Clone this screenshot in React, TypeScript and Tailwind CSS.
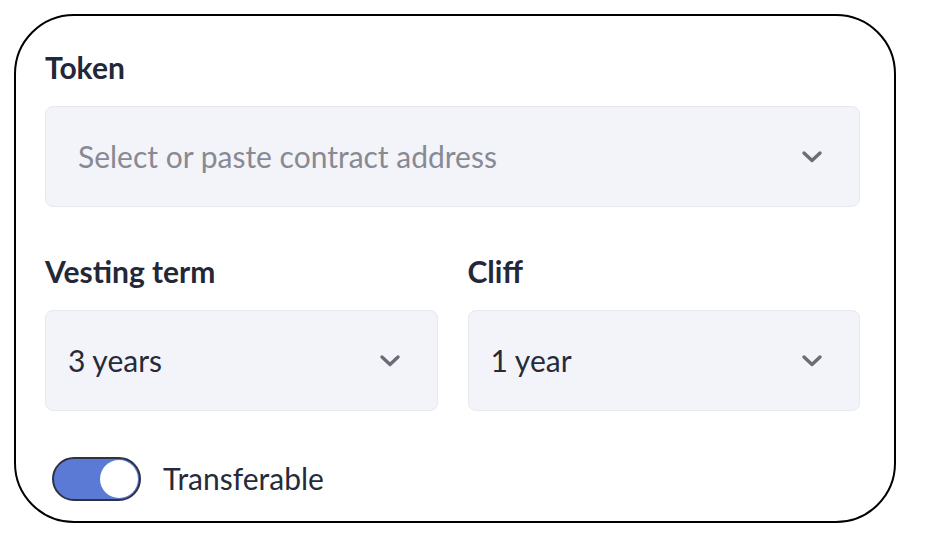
import React, { useState } from 'react';

function Chevron() {
  return (
    <svg width="22" height="14" viewBox="0 0 22 14" fill="none" className="shrink-0">
      <path d="M3 3 L11 10.5 L19 3" stroke="#6b6d76" strokeWidth="3.4" strokeLinecap="round" strokeLinejoin="round" />
    </svg>
  );
}

function SelectBox({ value, placeholder }: { value?: string; placeholder?: string }) {
  return (
    <div
      className={`flex h-[101px] items-center justify-between rounded-[8px] border border-[#e8e9ef] bg-[#f3f4f9] pr-[36px] ${
        value ? 'pl-[22px]' : 'pl-[32px]'
      }`}
    >
      {value ? (
        <span className="text-[30px] text-[#262b3a]">{value}</span>
      ) : (
        <span className="text-[30px] text-[#878a93]">{placeholder}</span>
      )}
      <Chevron />
    </div>
  );
}

export default function App() {
  const [on, setOn] = useState(true);

  return (
    <div className="h-[537px] w-[944px] bg-white pl-[14px] pt-[14px]" style={{ fontFamily: 'Lato, "Open Sans", sans-serif' }}>
      <div className="flex h-[509px] w-[882px] flex-col rounded-[60px] border-2 border-black pl-[29px] pr-[34px] pt-[36px]">
        <div className="text-[30px] font-bold leading-none text-[#232839]">Token</div>
        <div className="mt-[24px]">
          <SelectBox placeholder="Select or paste contract address" />
        </div>

        <div className="mt-[49px] grid grid-cols-2 gap-[30px]">
          <div>
            <div className="text-[30px] font-bold leading-none text-[#232839]">Vesting term</div>
            <div className="mt-[24px]">
              <SelectBox value="3 years" />
            </div>
          </div>
          <div>
            <div className="text-[30px] font-bold leading-none text-[#232839]">Cliff</div>
            <div className="mt-[24px]">
              <SelectBox value="1 year" />
            </div>
          </div>
        </div>

        <div className="mt-[45px] flex items-center gap-[22px] pl-[7px]">
          <button
            onClick={() => setOn(!on)}
            className="relative h-[44px] w-[89px] rounded-full border-2 border-[#2e3243] bg-[#5b7ad6]"
          >
            <span className={`absolute top-[1px] h-[38px] w-[38px] rounded-full bg-white ${on ? 'right-[1px]' : 'left-[1px]'}`} />
          </button>
          <span className="text-[30px] text-[#262b3a]">Transferable</span>
        </div>
      </div>
    </div>
  );
}
